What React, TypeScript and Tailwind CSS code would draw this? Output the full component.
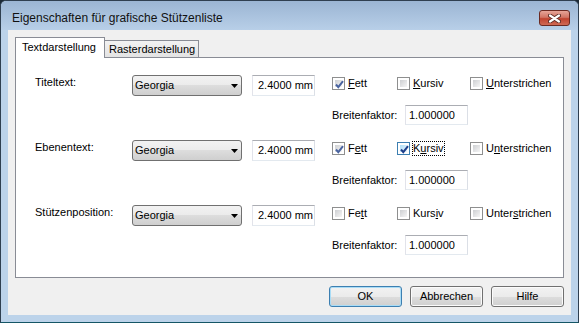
import React from "react";

type Acc = [string, string, string];

interface RowData {
  label: string;
  fett: Acc;
  kursiv: Acc;
  unter: Acc;
  fettOn: boolean;
  kursivOn: boolean;
  kursivFocus?: boolean;
}

const rows: RowData[] = [
  { label: "Titeltext:", fett: ["", "F", "ett"], kursiv: ["", "K", "ursiv"], unter: ["", "U", "nterstrichen"], fettOn: true, kursivOn: false },
  { label: "Ebenentext:", fett: ["F", "e", "tt"], kursiv: ["K", "u", "rsiv"], unter: ["U", "n", "terstrichen"], fettOn: true, kursivOn: true, kursivFocus: true },
  { label: "Stützenposition:", fett: ["Fe", "t", "t"], kursiv: ["Kurs", "i", "v"], unter: ["Unter", "s", "trichen"], fettOn: false, kursivOn: false },
];

const btnBg = "bg-[linear-gradient(#f2f2f2,#ebebeb_50%,#dddddd_50%,#cfcfcf)]";

const CheckBox = ({ text, checked, hot, focus, w }: { text: Acc; checked: boolean; hot?: boolean; focus?: boolean; w: string }) => (
  <div className={`flex items-center ${w}`}>
    <span className={`relative w-[13px] h-[13px] shrink-0 border bg-white ${hot ? "border-[#3c7fb1]" : "border-[#8e8f8f]"}`}>
      <span className={`absolute inset-[2px] ${hot ? "bg-gradient-to-br from-[#b1dff8] to-[#e8f6fd]" : "bg-gradient-to-br from-[#cdcfd2] to-[#f6f6f6]"}`} />
      {checked && (
        <svg className="absolute left-[1px] top-[1px]" width="11" height="11" viewBox="0 0 11 11">
          <path d="M2 5.5 L4.3 8.2 L9 2.2" fill="none" stroke={hot ? "#1f3f8a" : "#4a64a0"} strokeWidth="2" />
        </svg>
      )}
    </span>
    <span className={`ml-[3px] leading-[13px] ${focus ? "outline outline-1 outline-dotted outline-black" : ""}`}>
      {text[0]}
      <span className="underline underline-offset-[1px]">{text[1]}</span>
      {text[2]}
    </span>
  </div>
);

const Row = ({ r }: { r: RowData }) => (
  <div className="flex items-start h-[65px] pl-[19px]">
    <div className="w-[97px] leading-[13px] pt-[1px]">{r.label}</div>
    <div className={`w-[110px] h-[21px] flex items-center border border-[#707070] rounded-[3px] ${btnBg} pl-[2px]`}>
      <span className="flex-1">Georgia</span>
      <svg className="mr-[3px]" width="7" height="4" viewBox="0 0 7 4">
        <path d="M0 0 H7 L3.5 4 Z" fill="#000" />
      </svg>
    </div>
    <div className="ml-[10px] w-[63px] h-[21px] flex items-center border border-[#abadb3] border-b-[#e3e9ef] border-l-[#e2e3ea] border-r-[#dbdfe6] bg-white pl-[5px]">
      2.4000 mm
    </div>
    <div className="ml-[17px] flex flex-col">
      <div className="flex items-center pt-[2px]">
        <CheckBox text={r.fett} checked={r.fettOn} w="w-[65px]" />
        <CheckBox text={r.kursiv} checked={r.kursivOn} hot={r.kursivFocus} focus={r.kursivFocus} w="w-[73px]" />
        <CheckBox text={r.unter} checked={false} w="w-[90px]" />
      </div>
      <div className="flex items-center mt-[15px]">
        <span className="w-[73px]">Breitenfaktor:</span>
        <div className="w-[63px] h-[20px] flex items-center border border-[#abadb3] border-b-[#e3e9ef] border-l-[#e2e3ea] border-r-[#dbdfe6] bg-white pl-[3px]">
          1.000000
        </div>
      </div>
    </div>
  </div>
);

const DlgButton = ({ label, primary }: { label: string; primary?: boolean }) => (
  <div
    className={`w-[73px] h-[21px] flex items-center justify-center rounded-[3px] border ${
      primary ? "border-[#3c7fb1] shadow-[inset_0_0_0_1px_#a9dcf6]" : "border-[#707070] shadow-[inset_0_0_0_1px_#fbfbfb]"
    } ${btnBg}`}
  >
    {label}
  </div>
);

export default function App() {
  return (
    <div className="w-[579px] h-[323px] bg-[#1c2a36] font-['Liberation_Sans',Arial,sans-serif] text-[11px] text-black">
      <div className="w-full h-full flex flex-col border border-[#2f3f50] border-b-[#145666] rounded-t-[6px] bg-[#bcd3ea] overflow-hidden">
        {/* title bar */}
        <div className="h-[29px] flex items-start bg-gradient-to-b from-[#9bb5d3] to-[#b8cfe8]">
          <span className="pl-[11px] pt-[10px] text-[12px] leading-[15px] text-[#111]">
            Eigenschaften für grafische Stützenliste
          </span>
          <div className="ml-auto mr-[8px] mt-[9px] w-[31px] h-[16px] rounded-[3px] border border-[#6b2a22] bg-[linear-gradient(#e6a598,#d17565_45%,#c0432f_55%,#cf6a55)] flex items-center justify-center">
            <svg width="13" height="9" viewBox="0 0 13 9">
              <path d="M2 1.5 L11 7.5 M11 1.5 L2 7.5" stroke="#5a2a24" strokeWidth="4" strokeLinecap="round" />
              <path d="M2 1.5 L11 7.5 M11 1.5 L2 7.5" stroke="#ffffff" strokeWidth="2.2" strokeLinecap="round" />
            </svg>
          </div>
        </div>

        {/* client */}
        <div className="flex-1 mx-[7px] mb-[7px] bg-[#f0f0f0] flex flex-col">
          <div className="pt-[7px] pl-[7px] pr-[7px]">
            <div className="flex items-end h-[20px]">
              <div className="relative z-10 w-[90px] h-[21px] -mb-[1px] border border-b-0 border-[#898c95] bg-white pl-[6px] pt-[3px] leading-[13px]">
                Textdarstellung
              </div>
              <div className="w-[94px] h-[17px] border border-l-0 border-b-0 border-[#898c95] bg-gradient-to-b from-[#f2f2f2] to-[#e3e3e3] pl-[4px] pt-[2px] leading-[13px]">
                Rasterdarstellung
              </div>
            </div>
            <div className="h-[221px] border border-[#898c95] bg-white pt-[17px]">
              {rows.map((r) => (
                <Row key={r.label} r={r} />
              ))}
            </div>
          </div>
          <div className="flex justify-end gap-[8px] pr-[7px] pt-[8px]">
            <DlgButton label="OK" primary />
            <DlgButton label="Abbrechen" />
            <DlgButton label="Hilfe" />
          </div>
        </div>
      </div>
    </div>
  );
}
